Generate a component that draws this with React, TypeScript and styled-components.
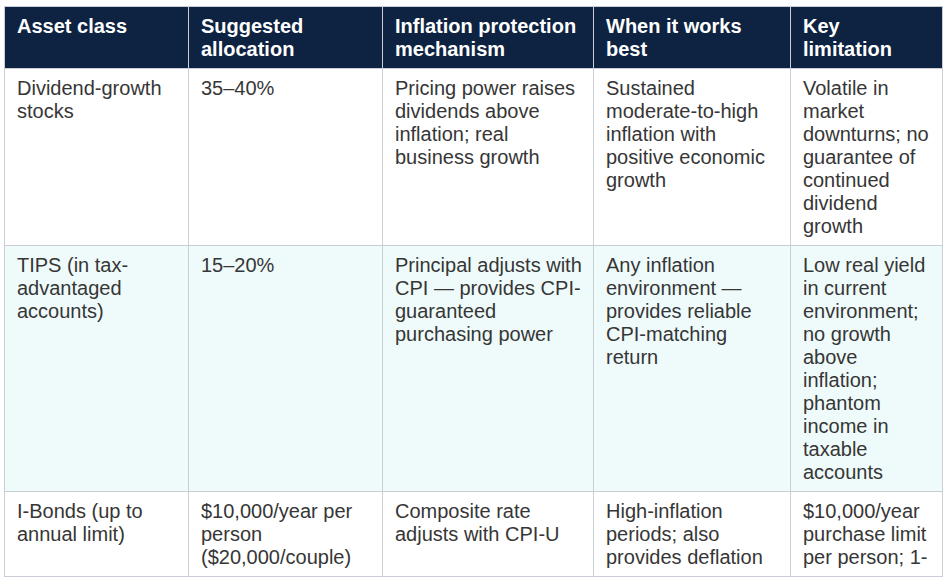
import styled, {createGlobalStyle} from 'styled-components';

const GlobalStyle = createGlobalStyle`
  html, body {
    margin: 0;
    padding: 0;
    background: #ffffff;
  }
  body {
    font-family: "Liberation Sans", Arial, sans-serif;
  }
`;

const columns = [
    {title: 'Asset class', width: 184},
    {title: 'Suggested allocation', width: 194},
    {title: 'Inflation protection mechanism', width: 211},
    {title: 'When it works best', width: 197},
    {title: 'Key limitation', width: 152},
];

const rows: string[][] = [
    [
        'Dividend-growth stocks',
        '35–40%',
        'Pricing power raises dividends above inflation; real business growth',
        'Sustained moderate-to-high inflation with positive economic growth',
        'Volatile in market downturns; no guarantee of continued dividend growth',
    ],
    [
        'TIPS (in tax-advantaged accounts)',
        '15–20%',
        'Principal adjusts with CPI — provides CPI-guaranteed purchasing power',
        'Any inflation environment — provides reliable CPI-matching return',
        'Low real yield in current environment; no growth above inflation; phantom income in taxable accounts',
    ],
    [
        'I-Bonds (up to annual limit)',
        '$10,000/year per person ($20,000/couple)',
        'Composite rate adjusts with CPI-U',
        'High-inflation periods; also provides deflation',
        '$10,000/year purchase limit per person; 1-',
    ],
];

const Page = styled.div`
  padding: 6px 3px 0 4px;
`;

const Table = styled.table`
  width: 938px;
  border-collapse: collapse;
  table-layout: fixed;
  font-size: 20px;
  line-height: 23px;
`;

const HeadCell = styled.th`
  background: #0e2341;
  color: #ffffff;
  font-weight: bold;
  text-align: left;
  vertical-align: top;
  padding: 8px 10px 7px 12px;
  border: 1px solid #c9ced6;
`;

const Row = styled.tr<{$tinted: boolean}>`
  background: ${p => (p.$tinted ? '#effbfb' : '#ffffff')};
`;

const Cell = styled.td`
  color: #363636;
  vertical-align: top;
  padding: 8px 10px 7px 12px;
  border: 1px solid #c9ced6;
`;

export default function App() {
    return (
        <>
            <GlobalStyle/>
            <Page>
                <Table>
                    <colgroup>
                        {columns.map(c => (
                            <col key={c.title} style={{width: c.width}}/>
                        ))}
                    </colgroup>
                    <thead>
                    <tr>
                        {columns.map(c => (
                            <HeadCell key={c.title}>{c.title}</HeadCell>
                        ))}
                    </tr>
                    </thead>
                    <tbody>
                    {rows.map((r, i) => (
                        <Row key={i} $tinted={i % 2 === 1}>
                            {r.map((text, j) => (
                                <Cell key={j}>{text}</Cell>
                            ))}
                        </Row>
                    ))}
                    </tbody>
                </Table>
            </Page>
        </>
    );
}
